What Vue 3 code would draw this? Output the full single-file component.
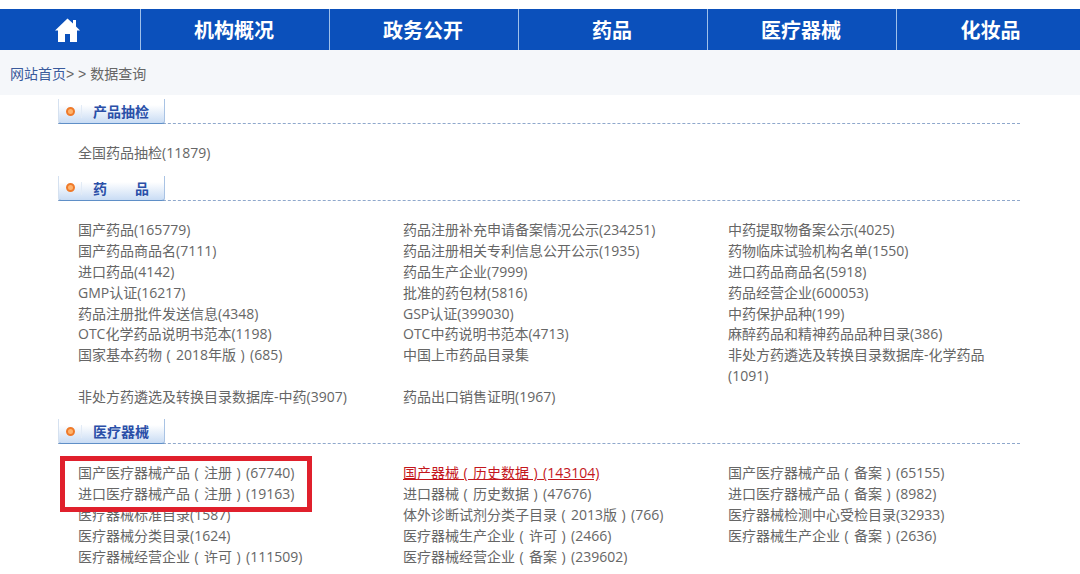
<script setup>
const nav = ['机构概况', '政务公开', '药品', '医疗器械', '化妆品']
const drugs = [
  '国产药品(165779)', '药品注册补充申请备案情况公示(234251)', '中药提取物备案公示(4025)',
  '国产药品商品名(7111)', '药品注册相关专利信息公开公示(1935)', '药物临床试验机构名单(1550)',
  '进口药品(4142)', '药品生产企业(7999)', '进口药品商品名(5918)',
  'GMP认证(16217)', '批准的药包材(5816)', '药品经营企业(600053)',
  '药品注册批件发送信息(4348)', 'GSP认证(399030)', '中药保护品种(199)',
  'OTC化学药品说明书范本(1198)', 'OTC中药说明书范本(4713)', '麻醉药品和精神药品品种目录(386)',
  '国家基本药物（2018年版）(685)', '中国上市药品目录集', '非处方药遴选及转换目录数据库-化学药品(1091)',
  '非处方药遴选及转换目录数据库-中药(3907)', '药品出口销售证明(1967)', ''
]
const devices = [
  '国产医疗器械产品（注册）(67740)', '国产器械（历史数据）(143104)', '国产医疗器械产品（备案）(65155)',
  '进口医疗器械产品（注册）(19163)', '进口器械（历史数据）(47676)', '进口医疗器械产品（备案）(8982)',
  '医疗器械标准目录(1587)', '体外诊断试剂分类子目录（2013版）(766)', '医疗器械检测中心受检目录(32933)',
  '医疗器械分类目录(1624)', '医疗器械生产企业（许可）(2466)', '医疗器械生产企业（备案）(2636)',
  '医疗器械经营企业（许可）(111509)', '医疗器械经营企业（备案）(239602)', ''
]
const parts = (s) => s.split(/([（）])/).filter(Boolean).map((t) => ({
  text: t === '（' ? '\u00a0(\u00a0' : t === '）' ? '\u00a0)\u00a0' : t,
  paren: t === '（' || t === '）'
}))
</script>

<template>
  <div class="page">
    <nav class="nav">
      <div class="nav-home">
        <svg width="25" height="24" viewBox="0 0 25 24"><path d="M12.5 0.5 L18 5.6 V2 H21 V8.4 L25 12.5 H22 V24 H15 V16 H10 V24 H3 V12.5 H0 Z" fill="#fff"/></svg>
      </div>
      <div v-for="n in nav" :key="n" class="nav-item">{{ n }}</div>
    </nav>
    <div class="crumb"><span class="crumb-link">网站首页</span><span class="sep">&gt; &gt; </span>数据查询</div>

    <section class="sec first">
      <div class="head"><div class="tab"><i class="dot"></i><b>产品抽检</b></div></div>
      <div class="grid"><span>全国药品抽检(11879)</span></div>
    </section>

    <section class="sec drugs">
      <div class="head"><div class="tab"><i class="dot"></i><b class="spread"><span>药</span><span>品</span></b></div></div>
      <div class="grid">
        <span v-for="(d, i) in drugs" :key="i"><template v-for="(p, j) in parts(d)" :key="j"><span v-if="p.paren" class="paren">{{ p.text }}</span><template v-else>{{ p.text }}</template></template></span>
      </div>
    </section>

    <section class="sec devices">
      <div class="head"><div class="tab"><i class="dot"></i><b>医疗器械</b></div></div>
      <div class="grid">
        <span v-for="(d, i) in devices" :key="i" :class="{ hot: i === 1 }"><template v-for="(p, j) in parts(d)" :key="j"><span v-if="p.paren" class="paren">{{ p.text }}</span><template v-else>{{ p.text }}</template></template></span>
      </div>
      <div class="mark"></div>
    </section>
  </div>
</template>

<style>
html, body { margin: 0; background: #fff; overflow: hidden; }
</style>

<style scoped>
.page {
  width: 1080px;
  height: 574px;
  overflow: hidden;
  padding-top: 9px;
  box-sizing: border-box;
  font-family: "Open Sans", "Noto Sans CJK SC", sans-serif;
  font-size: 14px;
  color: #666;
}
.nav {
  display: flex;
  height: 41px;
  background: #0b50bb;
  color: #fff;
  font-size: 20px;
  font-weight: 700;
}
.nav-home, .nav-item {
  display: flex;
  align-items: center;
  justify-content: center;
  box-sizing: border-box;
  border-right: 1px solid #9fc0ea;
}
.nav-home { width: 141px; padding-right: 5px; }
.nav-item { width: 189px; padding-right: 2px; }
.nav-item:last-child { width: 183px; border-right: 0; padding: 0 0 0 4px; }
.crumb {
  height: 45px;
  line-height: 48px;
  background: #f5f7fa;
  padding-left: 10px;
  font-size: 14px;
  font-family: "Liberation Sans", "Noto Sans CJK SC", sans-serif;
  color: #666;
  white-space: pre;
}
.crumb-link { color: #3a5a9c; }
.sec { margin-left: 58px; width: 962px; position: relative; }
.first { margin-top: 6px; }
.drugs { margin-top: 14px; }
.devices { margin-top: 13px; }
.head {
  display: flex;
  align-items: flex-start;
  height: 22px;
  border-bottom: 1px dashed #8fa8cc;
}
.tab {
  position: relative;
  width: 107px;
  height: 25px;
  margin-top: -2px;
  box-sizing: border-box;
  display: flex;
  align-items: center;
  border: 1px solid #d5e1f0;
  border-right-color: #a9c3e4;
  border-bottom: 1px solid #5f8fc7;
  border-top: 0;
  border-radius: 0 0 3px 3px;
  background: linear-gradient(#ffffff 25%, #c9dcf4);
}
.dot {
  width: 5px;
  height: 5px;
  border: 2px solid #ef7a2a;
  border-radius: 50%;
  background: #ffb46e;
  margin-left: 7px;
  margin-right: 18px;
  flex: none;
}
.dot::after {
  content: "";
  position: absolute;
  left: 22px;
  top: 6px;
  width: 1px;
  height: 13px;
  background: #e2ebf6;
}
.tab b {
  font-size: 14px;
  font-weight: 700;
  color: #2a4fa8;
  width: 56px;
  line-height: 24px;
  font-family: "Noto Sans CJK SC", sans-serif;
}
.spread { display: flex; justify-content: space-between; }
.grid {
  display: grid;
  grid-template-columns: 325px 325px 260px;
  padding: 19px 0 0 20px;
  line-height: 20.9px;
  font-size: 14px;
}
.paren { letter-spacing: 0.87px; }
.hot { color: #c4161c; text-decoration: underline; }
.mark {
  position: absolute;
  left: 2px;
  top: 35px;
  width: 242px;
  height: 46px;
  border: 5px solid #e0202c;
}
</style>
